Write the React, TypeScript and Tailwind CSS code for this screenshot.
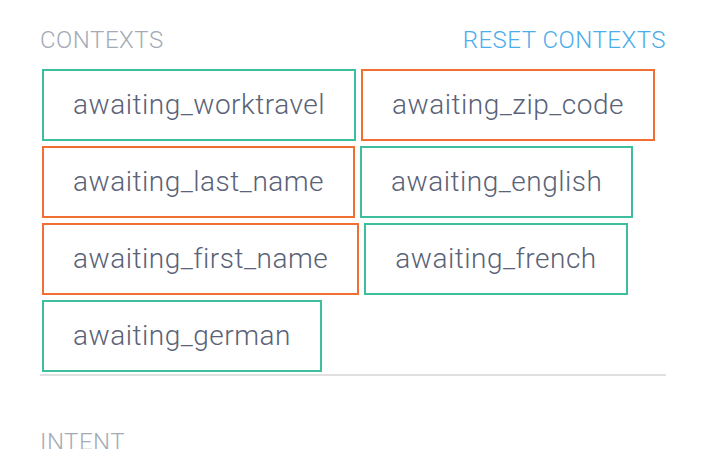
import React from "react"

type Context = {
  name: string
  tone: "teal" | "orange"
}

const contexts: Context[] = [
  { name: "awaiting_worktravel", tone: "teal" },
  { name: "awaiting_zip_code", tone: "orange" },
  { name: "awaiting_last_name", tone: "orange" },
  { name: "awaiting_english", tone: "teal" },
  { name: "awaiting_first_name", tone: "orange" },
  { name: "awaiting_french", tone: "teal" },
  { name: "awaiting_german", tone: "teal" },
]

export default function App() {
  return (
    <div
      className="h-[449px] w-[720px] overflow-hidden bg-white pl-[40px] pr-[54px] pt-[26px]"
      style={{ fontFamily: "Roboto, 'Liberation Sans', sans-serif" }}
    >
      {/* Header */}
      <div className="flex items-center justify-between text-[24px] font-light leading-[28px] tracking-[0.5px]">
        <span className="text-[#a4abb6]">CONTEXTS</span>
        <button type="button" className="text-[#4badeb]">
          RESET CONTEXTS
        </button>
      </div>

      {/* Context chips */}
      <ul className="mt-[15px] flex flex-wrap gap-[5px] pl-[2px]">
        {contexts.map((ctx) => (
          <li
            key={ctx.name}
            className={
              ctx.tone === "teal"
                ? "flex h-[72px] items-center border-2 border-[#3dbe9d] px-[29px] text-[28px] font-light tracking-[0.5px] text-[#5a6277]"
                : "flex h-[72px] items-center border-2 border-[#f26f34] px-[29px] text-[28px] font-light tracking-[0.5px] text-[#5a6277]"
            }
          >
            {ctx.name}
          </li>
        ))}
      </ul>

      <div className="mt-[2px] h-[2px] bg-[#e0e0e0]" />

      <div className="mt-[52px] text-[24px] font-light leading-[28px] tracking-[0.5px] text-[#a4abb6]">INTENT</div>
    </div>
  )
}
